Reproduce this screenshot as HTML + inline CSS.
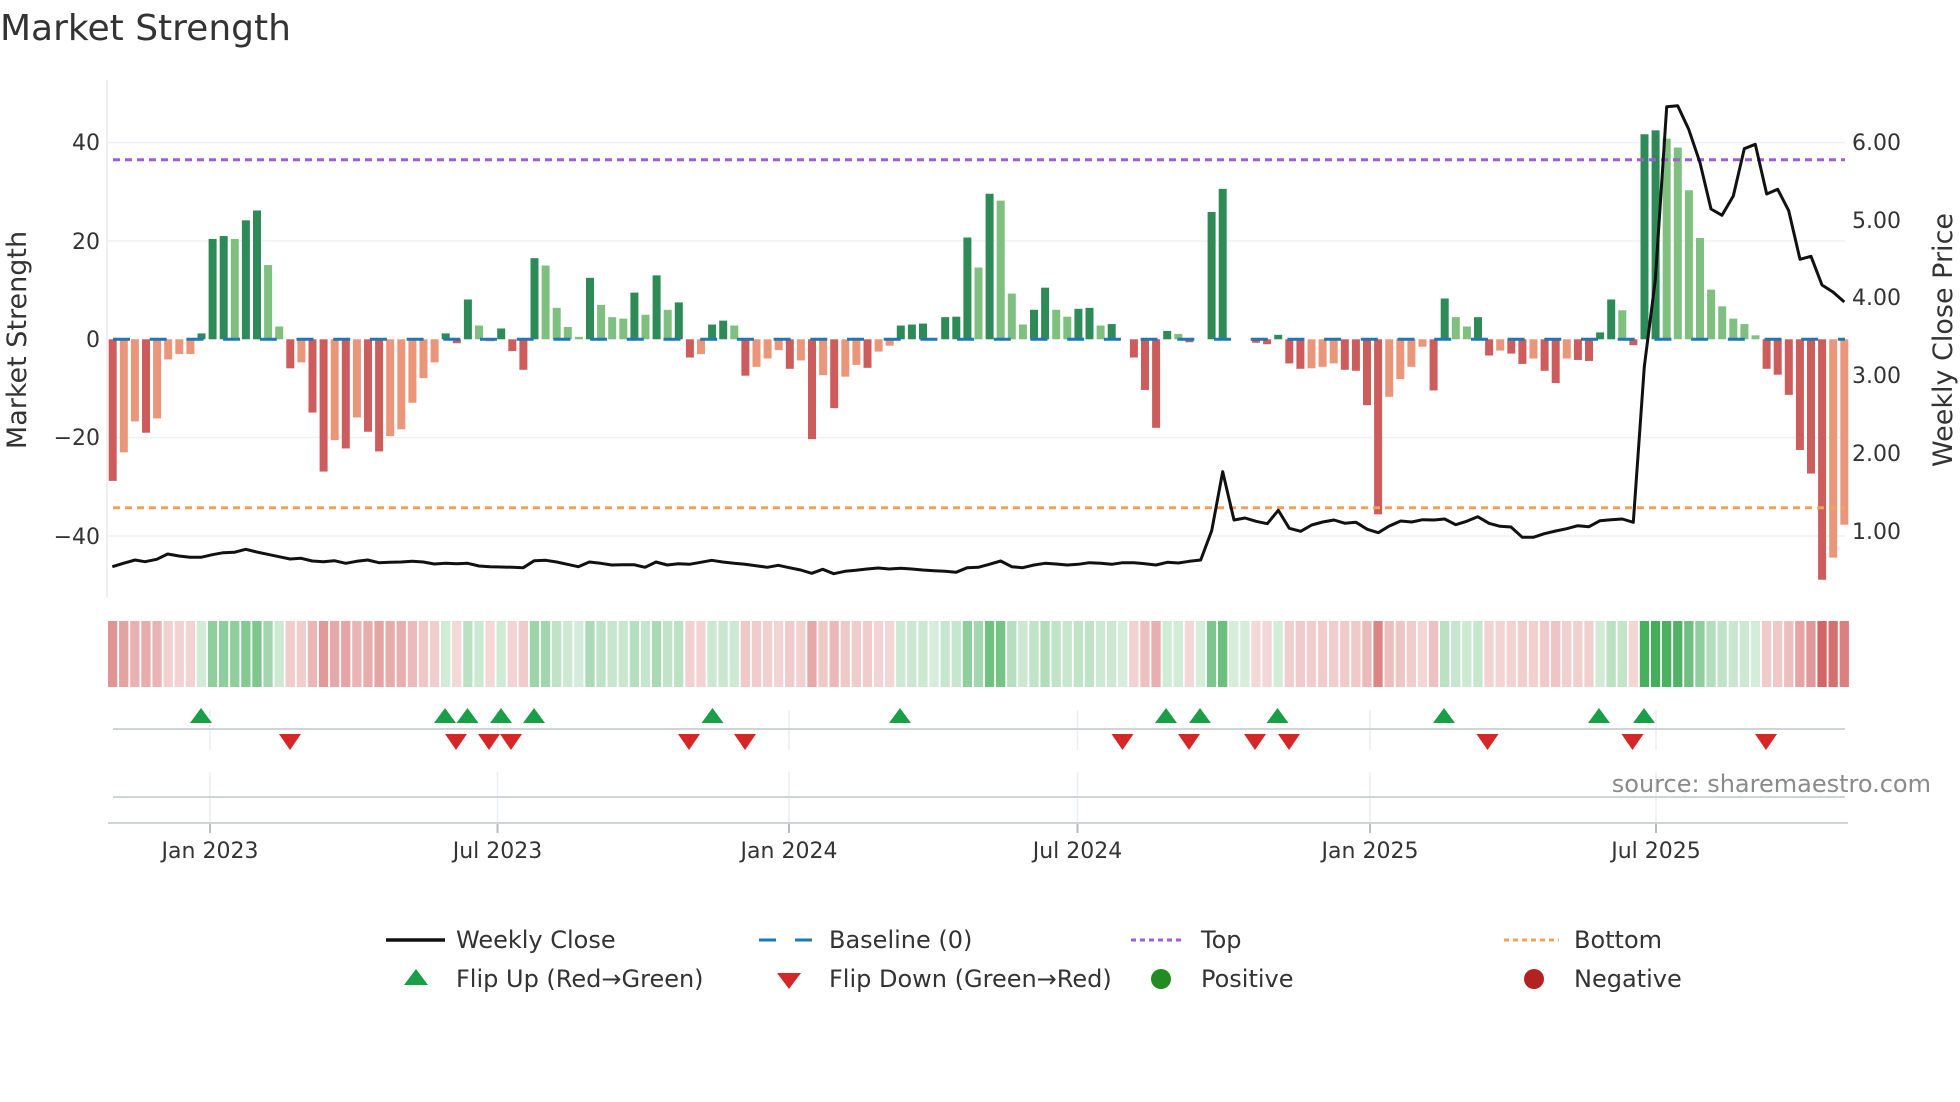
<!DOCTYPE html>
<html><head><meta charset="utf-8"><style>
html,body{margin:0;padding:0;background:#fff;width:1960px;height:1102px;overflow:hidden}
svg{display:block;font-family:"DejaVu Sans","Liberation Sans",sans-serif}
</style></head><body>
<svg id="s" width="1960" height="1102" viewBox="0 0 1960 1102" xmlns="http://www.w3.org/2000/svg">
<rect width="1960" height="1102" fill="#fff"/>
<text x="0" y="40" font-size="36" fill="#333">Market Strength</text>
<g id="grid"></g>
<line x1="107" y1="80" x2="107" y2="598" stroke="#e8eaee" stroke-width="1.5"/>
<g id="bars"></g>
<line x1="113" y1="339.3" x2="1845" y2="339.3" stroke="#1f77b4" stroke-width="3" stroke-dasharray="17,19.7"/>
<line x1="113" y1="159.7" x2="1845" y2="159.7" stroke="#9b5fd6" stroke-width="3" stroke-dasharray="7,5"/>
<line x1="113" y1="507.7" x2="1845" y2="507.7" stroke="#f2a05e" stroke-width="3" stroke-dasharray="7,5"/>
<polyline id="close" fill="none" stroke="#111" stroke-width="3" stroke-linejoin="round"/>
<g font-size="22" fill="#333">
<text x="100" y="150" text-anchor="end">40</text>
<text x="100" y="249" text-anchor="end">20</text>
<text x="100" y="347" text-anchor="end">0</text>
<text x="100" y="445" text-anchor="end">−20</text>
<text x="100" y="544" text-anchor="end">−40</text>
<text x="1852" y="150">6.00</text>
<text x="1852" y="228">5.00</text>
<text x="1852" y="305">4.00</text>
<text x="1852" y="383">3.00</text>
<text x="1852" y="461">2.00</text>
<text x="1852" y="539">1.00</text>
</g>
<text transform="translate(26,340) rotate(-90)" text-anchor="middle" font-size="27" fill="#333">Market Strength</text>
<text transform="translate(1952,340) rotate(-90)" text-anchor="middle" font-size="27" fill="#333">Weekly Close Price</text>
<g id="heat"></g>
<g id="vgrid"></g>
<line x1="113" y1="729" x2="1845" y2="729" stroke="#d0d3d8" stroke-width="2"/>
<line x1="113" y1="797" x2="1845" y2="797" stroke="#d0d3d8" stroke-width="2"/>
<line x1="108" y1="823" x2="1848" y2="823" stroke="#d0d3d8" stroke-width="2"/>
<g id="marks"></g>
<text x="1931" y="792" text-anchor="end" font-size="24" fill="#8a8a8a">source: sharemaestro.com</text>
<g id="ticks" font-size="22" fill="#333"></g>
<g font-size="24" fill="#333">
<line x1="386" y1="940" x2="445" y2="940" stroke="#111" stroke-width="3.5"/>
<text x="456" y="948">Weekly Close</text>
<line x1="759" y1="940" x2="812" y2="940" stroke="#1f77b4" stroke-width="3" stroke-dasharray="17,19"/>
<text x="829" y="948">Baseline (0)</text>
<line x1="1131" y1="940" x2="1185" y2="940" stroke="#9b5fd6" stroke-width="3" stroke-dasharray="5,4"/>
<text x="1201" y="948">Top</text>
<line x1="1504" y1="940" x2="1559" y2="940" stroke="#f2a05e" stroke-width="3" stroke-dasharray="5,4"/>
<text x="1574" y="948">Bottom</text>
<polygon points="404,985 428,985 416,969" fill="#1a9e48"/>
<text x="456" y="987">Flip Up (Red→Green)</text>
<polygon points="777,973 801,973 789,989" fill="#d62728"/>
<text x="829" y="987">Flip Down (Green→Red)</text>
<circle cx="1161" cy="979" r="10" fill="#228b22"/>
<text x="1201" y="987">Positive</text>
<circle cx="1534" cy="979" r="10" fill="#b22222"/>
<text x="1574" y="987">Negative</text>
</g>
</svg>
<script>
var NS="http://www.w3.org/2000/svg";
function el(p,t,a){var e=document.createElementNS(NS,t);for(var k in a)e.setAttribute(k,a[k]);p.appendChild(e);return e;}
var v=[-28.8,-23,-16.7,-19,-16.1,-4.1,-3,-3,1.2,20.4,21,20.4,24.2,26.2,15.1,2.6,-5.9,-4.7,-14.9,-26.9,-20.5,-22.2,-15.9,-18.8,-22.8,-19.7,-18.3,-12.9,-7.9,-4.7,1.2,-0.8,8.1,2.8,-0.4,2.2,-2.4,-6.2,16.5,15,6.4,
2.5,0.5,12.5,7,4.5,4.2,9.5,5,13,6,7.5,-3.7,-3,3,3.8,2.8,-7.4,-5.6,-3.9,-2.2,-6,-4.3,-20.3,-7.3,-14,-7.6,-5.2,-5.8,-2.5,-1.3,2.8,3,3.2,0,4.5,4.6,20.7,14.6,29.6,
28.2,9.3,3,6,10.5,6,4.6,6.2,6.4,2.8,3.1,0,-3.7,-10.3,-18,1.7,1.1,-0.6,0,25.9,30.6,0,0,-0.7,-1,0.9,-4.9,-6,-5.9,-5.6,-4.9,-6.2,-6.4,-13.4,-35.6,-11.7,-8.1,-5.6,-1.5,-10.4,
8.3,4.5,2.6,4.5,-3.3,-2.3,-2.9,-5,-3.9,-6.4,-8.9,-3.9,-4.2,-4.4,1.4,8.1,5.9,-1.2,41.7,42.5,40.8,39,30.3,20.6,10.1,6.7,4.2,3.1,0.8,-6,-7.2,-11.3,-22.5,-27.3,-48.9,-44.4,-37.7];
var light={1:1,2:1,4:1,5:1,6:1,7:1,11:1,14:1,15:1,17:1,20:1,22:1,25:1,26:1,27:1,28:1,29:1,33:1,34:1,39:1,40:1,41:1,42:1,44:1,45:1,46:1,48:1,50:1,53:1,56:1,58:1,59:1,60:1,62:1,64:1,66:1,67:1,69:1,70:1,78:1,80:1,81:1,82:1,85:1,86:1,89:1,96:1,108:1,109:1,110:1,115:1,116:1,117:1,118:1,121:1,122:1,125:1,128:1,131:1,136:1,140:1,141:1,142:1,143:1,144:1,145:1,146:1,147:1,148:1,155:1,156:1};
var Z=339.3,U=4.917;
var g=document.getElementById('grid');
[40,20,-20,-40].forEach(function(t){var y=Z-t*U;el(g,'line',{x1:108,y1:y,x2:1845,y2:y,stroke:'#eef0f4','stroke-width':1.5});});
var b=document.getElementById('bars'),h=document.getElementById('heat');
for(var i=0;i<v.length;i++){
 var cx=112.7+11.1*i,val=v[i];
 var col=val>=0?(light[i]?'#7fbf7f':'#2e8b57'):(light[i]?'#e9967a':'#cd5c5c');
 if(val!=0){var y1=val>0?Z-val*U:Z,hh=Math.abs(val)*U;el(b,'rect',{x:cx-4,y:y1,width:8,height:hh,fill:col});}
 var a;
 if(val>=0){a=0.2+0.75*Math.min(val/45,1);el(h,'rect',{x:108+11.1*i,y:621,width:9.3,height:66,fill:'rgba(50,165,75,'+a.toFixed(3)+')'});}
 else{a=0.22+0.7*Math.min(-val/50,1);el(h,'rect',{x:108+11.1*i,y:621,width:9.3,height:66,fill:'rgba(205,85,85,'+a.toFixed(3)+')'});}
}
var pts=[];
function add(ox,oy,arr){for(var k=0;k<arr.length;k+=2)pts.push((ox+arr[k]/3).toFixed(1)+','+(oy+arr[k+1]/3).toFixed(1));}
add(105,180,[22,1160,55,1150,90,1140,120,1145,155,1138,188,1122,222,1128,255,1132,288,1132,322,1124,355,1118,388,1117,422,1108,455,1116,488,1123,522,1130,555,1137,588,1135,622,1143,655,1145,688,1142,722,1150,755,1144,788,1140,822,1148,855,1147,888,1146,922,1144,955,1146,988,1152,1022,1150,1055,1151,1088,1150,1122,1158,1155,1160,1188,1161,1222,1162,1255,1163,1288,1142,1322,1141]);
add(550,180,[20,1146,52,1153,85,1160,118,1146,152,1150,185,1155,218,1154,252,1154,285,1162,318,1146,352,1155,385,1151,418,1153,452,1147,485,1141,518,1146,552,1150,585,1153,618,1157,652,1162,685,1156,718,1163,752,1170,785,1180,818,1168,851,1181,885,1174,918,1171,951,1167,985,1164,1018,1167,1052,1165,1085,1167,1118,1170,1152,1172,1185,1174,1218,1177,1252,1163,1285,1162,1318,1153]);
add(995,180,[17,1143,50,1160,83,1163,117,1155,150,1150,183,1152,217,1155,250,1153,283,1148,317,1150,350,1153,383,1148,417,1148,450,1151,483,1155,517,1147,550,1149,583,1144,617,1140,650,1052,683,875,717,1020,750,1014,783,1024,817,1031,850,991,883,1045,917,1054,950,1035,983,1026,1017,1020,1050,1030,1083,1027,1117,1048,1150,1058,1183,1038,1217,1023,1250,1026,1283,1019,1317,1020]);
add(1440,90,[14,1287,47,1304,80,1294,113,1280,147,1300,180,1309,213,1311,247,1342,280,1342,313,1331,347,1323,380,1316,413,1307,447,1310,480,1292,513,1289,547,1287,580,1297,613,830,646,570,680,50,713,47,746,118,780,218,813,357,846,376,880,318,913,176,946,163,980,312,1013,298,1046,362,1080,508,1113,499,1146,585,1180,607,1213,636]);
document.getElementById('close').setAttribute('points',pts.join(' '));
var vg=document.getElementById('vgrid'),tk=document.getElementById('ticks');
[[210,'Jan 2023'],[497.5,'Jul 2023'],[789,'Jan 2024'],[1077.5,'Jul 2024'],[1370,'Jan 2025'],[1656,'Jul 2025']].forEach(function(t){
 el(vg,'line',{x1:t[0],y1:710,x2:t[0],y2:750,stroke:'#eceef2','stroke-width':1.5});
 el(vg,'line',{x1:t[0],y1:772,x2:t[0],y2:822,stroke:'#eceef2','stroke-width':1.5});
 el(vg,'line',{x1:t[0],y1:823,x2:t[0],y2:833,stroke:'#bbb','stroke-width':2});
 var e=el(tk,'text',{x:t[0],y:858,'text-anchor':'middle'});e.textContent=t[1];});
var m=document.getElementById('marks');
[201,445,467.5,501,534,712.5,900,1166,1200,1277.5,1444,1599,1644].forEach(function(x){el(m,'polygon',{points:(x-11)+',723 '+(x+11)+',723 '+x+',708',fill:'#1a9e48'});});
[290,456,489,511,689,745,1122.5,1189,1255,1289,1487.5,1632.5,1766].forEach(function(x){el(m,'polygon',{points:(x-11)+',734 '+(x+11)+',734 '+x+',750',fill:'#d62728'});});
</script>
</body></html>
